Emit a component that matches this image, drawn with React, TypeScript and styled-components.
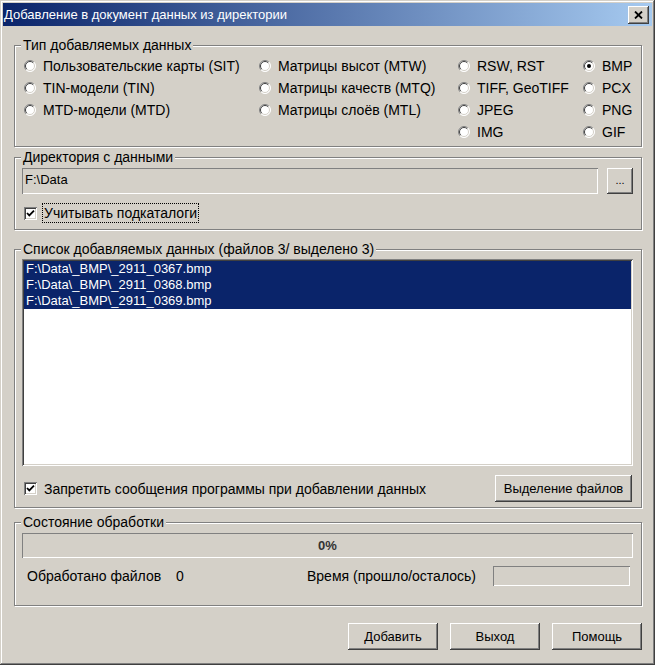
import styled, { createGlobalStyle } from "styled-components";

const GlobalStyle = createGlobalStyle`
  html, body {
    margin: 0;
    padding: 0;
    background: #d4d0c8;
  }
  body {
    font-family: "Liberation Sans", Arial, sans-serif;
    font-size: 14px;
    color: #000;
  }
  * {
    box-sizing: border-box;
  }
`;

type Option = { label: string; checked?: boolean } | null;

const typeOptions: Option[] = [
  { label: "Пользовательские карты (SIT)" },
  { label: "Матрицы высот (MTW)" },
  { label: "RSW, RST" },
  { label: "BMP", checked: true },
  { label: "TIN-модели (TIN)" },
  { label: "Матрицы качеств (MTQ)" },
  { label: "TIFF, GeoTIFF" },
  { label: "PCX" },
  { label: "MTD-модели (MTD)" },
  { label: "Матрицы слоёв (MTL)" },
  { label: "JPEG" },
  { label: "PNG" },
  null,
  null,
  { label: "IMG" },
  { label: "GIF" },
];

const files = [
  "F:\\Data\\_BMP\\_2911_0367.bmp",
  "F:\\Data\\_BMP\\_2911_0368.bmp",
  "F:\\Data\\_BMP\\_2911_0369.bmp",
];

const Radio = ({ checked }: { checked?: boolean }) => (
  <svg width="12" height="12" viewBox="0 0 12 12">
    <circle cx="6" cy="6" r="5.5" fill="#fff" />
    <path d="M9.9 2.1 A5.5 5.5 0 0 0 2.1 9.9" stroke="#808080" fill="none" />
    <path d="M2.1 9.9 A5.5 5.5 0 0 0 9.9 2.1" stroke="#ffffff" fill="none" />
    <path d="M9.2 2.8 A4.5 4.5 0 0 0 2.8 9.2" stroke="#404040" fill="none" />
    <path d="M2.8 9.2 A4.5 4.5 0 0 0 9.2 2.8" stroke="#d4d0c8" fill="none" />
    {checked && <circle cx="6" cy="6" r="2" fill="#000" />}
  </svg>
);

const Check = () => (
  <CheckBox>
    <svg width="9" height="9" viewBox="0 0 9 9">
      <path d="M1 4 L3.3 6.4 L8 1.6" stroke="#000" strokeWidth="1.8" fill="none" />
    </svg>
  </CheckBox>
);

const App = () => {
  return (
    <>
      <GlobalStyle />
      <Window>
        <TitleBar>
          <Caption>Добавление в документ данных из директории</Caption>
          <CloseButton>
            <svg width="9" height="8" viewBox="0 0 9 8">
              <path d="M1 0.5 L8 7.5 M8 0.5 L1 7.5" stroke="#000" strokeWidth="1.8" />
            </svg>
          </CloseButton>
        </TitleBar>

        <Group $mt={12} $pt={3} $pb={3}>
          <Legend>Тип добавляемых данных</Legend>
          <TypeGrid>
            {typeOptions.map((o, i) =>
              o ? (
                <RadioItem key={i}>
                  <Radio checked={o.checked} />
                  <span>{o.label}</span>
                </RadioItem>
              ) : (
                <span key={i} />
              )
            )}
          </TypeGrid>
        </Group>

        <Group $mt={3} $pt={4} $pb={7}>
          <Legend>Директория с данными</Legend>
          <PathRow>
            <Field>F:\Data</Field>
            <SmallButton>...</SmallButton>
          </PathRow>
          <CheckRow $mt={10}>
            <Check />
            <FocusLabel>Учитывать подкаталоги</FocusLabel>
          </CheckRow>
        </Group>

        <Group $mt={12} $pt={3} $pb={5}>
          <Legend>Список добавляемых данных (файлов 3/ выделено 3)</Legend>
          <ListBox>
            {files.map((f) => (
              <ListItem key={f}>{f}</ListItem>
            ))}
          </ListBox>
          <ListFooter>
            <CheckRow>
              <Check />
              <span>Запретить сообщения программы при добавлении данных</span>
            </CheckRow>
            <Button $w={137}>Выделение файлов</Button>
          </ListFooter>
        </Group>

        <Group $mt={7} $pt={4} $pb={19}>
          <Legend>Состояние обработки</Legend>
          <Progress>0%</Progress>
          <StatsRow>
            <StatLabel $w={149}>Обработано файлов</StatLabel>
            <StatLabel $w={131}>0</StatLabel>
            <StatLabel $w={186}>Время (прошло/осталось)</StatLabel>
            <TimeBox />
          </StatsRow>
        </Group>

        <Footer>
          <Button $w={90}>Добавить</Button>
          <Button $w={90}>Выход</Button>
          <Button $w={90}>Помощь</Button>
        </Footer>
      </Window>
    </>
  );
};

const Window = styled.div`
  width: 655px;
  height: 665px;
  padding: 3px;
  background: #d4d0c8;
  box-shadow: inset -1px -1px #404040, inset 1px 1px #d4d0c8,
    inset -2px -2px #808080, inset 2px 2px #ffffff;
  display: flex;
  flex-direction: column;
`;

const TitleBar = styled.div`
  height: 23px;
  background: linear-gradient(to right, #0a246a, #a6caf0);
  display: flex;
  align-items: center;
  justify-content: space-between;
  padding: 0 3px 0 1px;
`;

const Caption = styled.div`
  color: #fff;
  font-size: 13px;
  white-space: nowrap;
`;

const CloseButton = styled.div`
  width: 21px;
  height: 18px;
  background: #d4d0c8;
  box-shadow: inset -1px -1px #404040, inset 1px 1px #ffffff,
    inset -2px -2px #808080, inset 2px 2px #d4d0c8;
  display: flex;
  align-items: center;
  justify-content: center;
`;

const Group = styled.fieldset<{ $mt: number; $pt: number; $pb: number }>`
  margin: ${(p) => p.$mt}px 10px 0 11px;
  padding: ${(p) => p.$pt}px 8px ${(p) => p.$pb}px 7px;
  min-width: 0;
  border: 1px solid #808080;
  box-shadow: inset 1px 1px #ffffff, 1px 1px #ffffff;
`;

const Legend = styled.legend`
  font-size: 14px;
  line-height: 14px;
  padding: 0 2px;
  margin-left: -1px;
  background: #d4d0c8;
`;

const TypeGrid = styled.div`
  display: grid;
  grid-template-columns: 235px 199px 125px 1fr;
  grid-auto-rows: 22px;
`;

const RadioItem = styled.label`
  display: flex;
  align-items: center;
  gap: 7px;
  padding-left: 2px;
  white-space: nowrap;
`;

const PathRow = styled.div`
  display: flex;
  gap: 9px;
`;

const Sunken = styled.div`
  background: #d4d0c8;
  box-shadow: inset 1px 1px #808080, inset -1px -1px #ffffff;
`;

const Field = styled(Sunken)`
  flex: 1;
  height: 26px;
  padding: 4px 3px;
  line-height: 15px;
  font-size: 13px;
`;

const SmallButton = styled.div`
  width: 26px;
  height: 26px;
  background: #d4d0c8;
  box-shadow: inset -1px -1px #404040, inset 1px 1px #ffffff,
    inset -2px -2px #808080, inset 2px 2px #d4d0c8;
  display: flex;
  align-items: center;
  justify-content: center;
  font-size: 11px;
  line-height: 11px;
  padding-bottom: 2px;
`;

const CheckRow = styled.div<{ $mt?: number }>`
  display: flex;
  align-items: center;
  gap: 7px;
  height: 18px;
  margin-top: ${(p) => p.$mt ?? 0}px;
  padding-left: 2px;
  white-space: nowrap;
`;

const CheckBox = styled.div`
  width: 13px;
  height: 13px;
  background: #fff;
  box-shadow: inset 1px 1px #808080, inset -1px -1px #ffffff,
    inset 2px 2px #404040, inset -2px -2px #d4d0c8;
  display: flex;
  align-items: center;
  justify-content: center;
  flex: none;
`;

const FocusLabel = styled.span`
  outline: 1px dotted #000;
  padding: 1px 1px;
  margin-left: -1px;
`;

const ListBox = styled.div`
  height: 207px;
  background: #fff;
  padding: 2px;
  box-shadow: inset 1px 1px #808080, inset -1px -1px #ffffff,
    inset 2px 2px #404040, inset -2px -2px #d4d0c8;
`;

const ListItem = styled.div`
  height: 16px;
  line-height: 16px;
  padding-left: 2px;
  font-size: 13px;
  background: #0a246a;
  color: #fff;
  white-space: nowrap;
`;

const ListFooter = styled.div`
  display: flex;
  align-items: center;
  justify-content: space-between;
  margin-top: 9px;
  padding-right: 1px;
`;

const Button = styled.div<{ $w: number }>`
  width: ${(p) => p.$w}px;
  height: 27px;
  background: #d4d0c8;
  box-shadow: inset -1px -1px #404040, inset 1px 1px #ffffff,
    inset -2px -2px #808080, inset 2px 2px #d4d0c8;
  display: flex;
  align-items: center;
  justify-content: center;
  font-size: 13px;
  white-space: nowrap;
`;

const Progress = styled(Sunken)`
  height: 25px;
  display: flex;
  align-items: center;
  justify-content: center;
  font-size: 13px;
  font-weight: bold;
  color: #333;
`;

const StatsRow = styled.div`
  display: flex;
  align-items: center;
  margin-top: 8px;
  height: 20px;
  padding-left: 5px;
`;

const StatLabel = styled.span<{ $w: number }>`
  width: ${(p) => p.$w}px;
  white-space: nowrap;
`;

const TimeBox = styled(Sunken)`
  width: 137px;
  height: 20px;
`;

const Footer = styled.div`
  display: flex;
  justify-content: flex-end;
  gap: 12px;
  margin: 17px 10px 0 0;
`;

export default App;
